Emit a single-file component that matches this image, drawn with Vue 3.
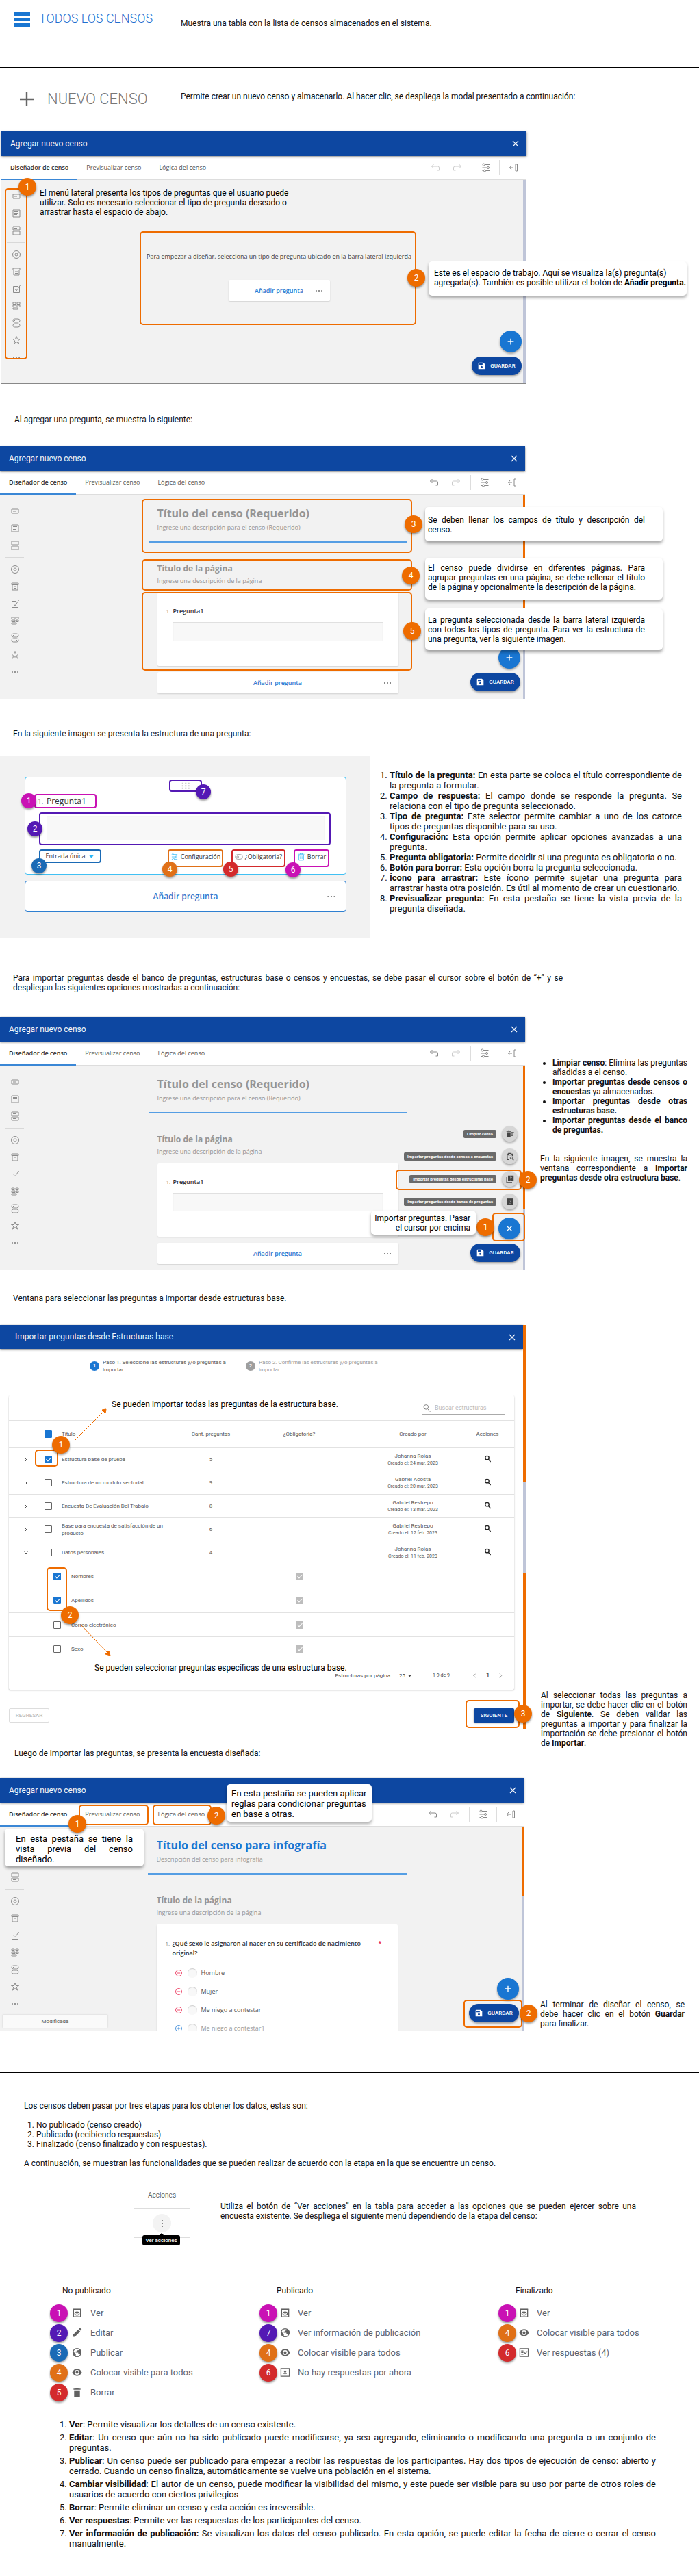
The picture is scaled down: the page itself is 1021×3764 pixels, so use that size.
<script setup>
const tools = ['text', 'comment', 'multi', null, 'radio', 'dropdown', 'check', 'tags', 'switch', 'star', 'dots']

const importOptions = [
  { label: 'Limpiar censo', icon: 'sweep' },
  { label: 'Importar preguntas desde censos o encuestas', icon: 'clip' },
  { label: 'Importar preguntas desde estructuras base', icon: 'quizzes' },
  { label: 'Importar preguntas desde banco de preguntas', icon: 'quiz' },
]

const structures = [
  { title: 'Estructura base de prueba', count: 5, author: 'Johanna Rojas', date: '24 mar. 2023', checked: true },
  { title: 'Estructura de un modulo sectorial', count: 9, author: 'Gabriel Acosta', date: '20 mar. 2023' },
  { title: 'Encuesta De Evaluación Del Trabajo', count: 8, author: 'Gabriel Restrepo', date: '13 mar. 2023' },
  { title: 'Base para encuesta de satisfacción de un producto', count: 6, author: 'Gabriel Restrepo', date: '12 feb. 2023' },
  { title: 'Datos personales', count: 4, author: 'Johanna Rojas', date: '11 feb. 2023', open: true },
]

const questions = [
  { title: 'Nombres', checked: true },
  { title: 'Apellidos', checked: true },
  { title: 'Correo electrónico', checked: false },
  { title: 'Sexo', checked: false },
]

const parts = [
  ['Título de la pregunta:', 'En esta parte se coloca el título correspondiente de la pregunta a formular.'],
  ['Campo de respuesta:', 'El campo donde se responde la pregunta. Se relaciona con el tipo de pregunta seleccionado.'],
  ['Tipo de pregunta:', 'Este selector permite cambiar a uno de los catorce tipos de preguntas disponible para su uso.'],
  ['Configuración:', 'Esta opción permite aplicar opciones avanzadas a una pregunta.'],
  ['Pregunta obligatoria:', 'Permite decidir si una pregunta es obligatoria o no.'],
  ['Botón para borrar:', 'Esta opción borra la pregunta seleccionada.'],
  ['Ícono para arrastrar:', 'Este ícono permite sujetar una pregunta para arrastrar hasta otra posición. Es útil al momento de crear un cuestionario.'],
  ['Previsualizar pregunta:', 'En esta pestaña se tiene la vista previa de la pregunta diseñada.'],
]

const answers = ['Hombre', 'Mujer', 'Me niego a contestar', 'Me niego a contestar1']

const menus = [
  {
    name: 'No publicado',
    items: [
      { n: 1, tone: 'magenta', icon: 'preview', label: 'Ver' },
      { n: 2, tone: 'purple', icon: 'pencil', label: 'Editar' },
      { n: 3, tone: 'blue', icon: 'globe', label: 'Publicar' },
      { n: 4, tone: 'amber', icon: 'eye', label: 'Colocar visible para todos' },
      { n: 5, tone: 'red', icon: 'bin', label: 'Borrar' },
    ],
  },
  {
    name: 'Publicado',
    items: [
      { n: 1, tone: 'magenta', icon: 'preview', label: 'Ver' },
      { n: 7, tone: 'purple', icon: 'globe', label: 'Ver información de publicación' },
      { n: 4, tone: 'amber', icon: 'eye', label: 'Colocar visible para todos' },
      { n: 6, tone: 'red', icon: 'boxx', label: 'No hay respuestas por ahora' },
    ],
  },
  {
    name: 'Finalizado',
    items: [
      { n: 1, tone: 'magenta', icon: 'preview', label: 'Ver' },
      { n: 4, tone: 'amber', icon: 'eye', label: 'Colocar visible para todos' },
      { n: 6, tone: 'red', icon: 'fact', label: 'Ver respuestas (4)' },
    ],
  },
]

const glossary = [
  ['Ver', ': Permite visualizar los detalles de un censo existente.'],
  ['Editar', ': Un censo que aún no ha sido publicado puede modificarse, ya sea agregando, eliminando o modificando una pregunta o un conjunto de preguntas.'],
  ['Publicar', ': Un censo puede ser publicado para empezar a recibir las respuestas de los participantes. Hay dos tipos de ejecución de censo: abierto y cerrado. Cuando un censo finaliza, automáticamente se vuelve una población en el sistema.'],
  ['Cambiar visibilidad', ': El autor de un censo, puede modificar la visibilidad del mismo, y este puede ser visible para su uso por parte de otros roles de usuarios de acuerdo con ciertos privilegios'],
  ['Borrar', ': Permite eliminar un censo y esta acción es irreversible.'],
  ['Ver respuestas', ': Permite ver las respuestas de los participantes del censo.'],
  ['Ver información de publicación:', ' Se visualizan los datos del censo publicado. En esta opción, se puede editar la fecha de cierre o cerrar el censo manualmente.'],
]
</script>

<template>
  <svg class="sprite" aria-hidden="true">
    <symbol id="i-text" viewBox="0 0 16 16"><path d="M3 5h10v6H3zM5 8h4" /></symbol>
    <symbol id="i-comment" viewBox="0 0 16 16"><path d="M3 3h10v10H3zM5 5.500h6M5 7.500h6M5 9.500h4" /></symbol>
    <symbol id="i-multi" viewBox="0 0 16 16"><path d="M3 2h10v5H3zM3 9h10v5H3zM5 4.500h4M5 11.500h4" /></symbol>
    <symbol id="i-radio" viewBox="0 0 16 16"><circle cx="8" cy="8" r="5.500" /><circle cx="8" cy="8" r="2" /></symbol>
    <symbol id="i-dropdown" viewBox="0 0 16 16"><path d="M3 3h10v2.500H3zM4 5.500h8V13H4zM6 8h4M6 10.500h4" /></symbol>
    <symbol id="i-check" viewBox="0 0 16 16"><path d="M12.500 6v7.500h-9v-9H10M6 8.500l2 2.500 5.500-8" /></symbol>
    <symbol id="i-tags" viewBox="0 0 16 16"><path d="M3 3h4v2.500H3zM9 3h4v2.500H9zM3 7h5v2.500H3zM10 7h3v2.500h-3zM3 11h7v2H3z" /></symbol>
    <symbol id="i-switch" viewBox="0 0 16 16"><rect x="3" y="2" width="10" height="5" rx="2.500" /><rect x="3" y="9" width="10" height="5" rx="2.500" /><path d="M5 4.500h1M10 11.500h1" /></symbol>
    <symbol id="i-star" viewBox="0 0 16 16"><path d="M8 2.500l1.500 4h4l-3.200 2.400 1.200 4.200L8 10.500l-3.500 2.600 1.200-4.200L2.500 6.500h4z" /></symbol>
    <symbol id="i-dots" viewBox="0 0 16 16"><path d="M3 8h1.800M7.100 8h1.800M11.200 8h1.800" stroke-width="1.800" /></symbol>
    <symbol id="i-undo" viewBox="0 0 16 16"><path d="M5.500 3L2.500 6l3 3M2.500 6h9q2 0 2 2v4h-3" /></symbol>
    <symbol id="i-redo" viewBox="0 0 16 16"><path d="M10.500 3l3 3-3 3M13.500 6h-9q-2 0-2 2v4h3" /></symbol>
    <symbol id="i-tune" viewBox="0 0 16 16"><circle cx="4.500" cy="3.500" r="1.500" /><circle cx="11" cy="8" r="1.500" /><circle cx="6" cy="12.500" r="1.500" /><path d="M6 3.500h7.500M2.500 8h7M2.500 12.500h2M7.500 12.500h6" /></symbol>
    <symbol id="i-collapse" viewBox="0 0 16 16"><path d="M5 5L2.500 8 5 11M2.500 8H8M11 3h2.500v10H11z" /></symbol>
    <symbol id="i-close" viewBox="0 0 16 16"><path d="M4 4l8 8M12 4l-8 8" /></symbol>
    <symbol id="i-plus" viewBox="0 0 16 16"><path d="M8 3v10M3 8h10" /></symbol>
    <symbol id="i-save" viewBox="0 0 16 16"><path class="fill" fill-rule="evenodd" d="M2 1h9.500L15 4.500V15H1V2zM3 3v3h7V3zM8 8.500a2.200 2.200 0 100 4.400 2.200 2.200 0 000-4.400z" /></symbol>
    <symbol id="i-sweep" viewBox="0 0 16 16"><path class="fill" d="M2 4.500h7V14H2zM1 2h2.500l1-1h2l1 1H10v1.500H1z" /><path d="M10.500 5h5M10.500 8h4M10.500 11h3" stroke-width="1.600" /></symbol>
    <symbol id="i-clip" viewBox="0 0 16 16"><path d="M6 14H2.500V3H5M10 3h2.500v4M5 1.800h5V5H5z" stroke-width="1.600" /><circle cx="10.500" cy="10.500" r="2.200" /><path d="M12 12l3 3" stroke-width="1.600" /></symbol>
    <symbol id="i-quizzes" viewBox="0 0 16 16"><path class="fill" d="M4 1h11v11H4z" /><path d="M1.500 4v10.500H12" stroke-width="1.600" /><path class="cut" d="M8 4.500q1.500-1.500 3 0 .3 1-1.500 2.500v.8M9.500 9v1.200" /></symbol>
    <symbol id="i-quiz" viewBox="0 0 16 16"><path class="fill" d="M1.500 1.500h13v13h-13z" /><path class="cut" d="M6 5.500q2-2 4 0 .3 1.500-2 3v1M8 10.800V12" /></symbol>
    <symbol id="i-search" viewBox="0 0 16 16"><circle cx="6.500" cy="6" r="4" /><path d="M9.500 9.500l4.500 5" /></symbol>
    <symbol id="i-next" viewBox="0 0 16 16"><path d="M5 3l5 5-5 5" /></symbol>
    <symbol id="i-prev" viewBox="0 0 16 16"><path d="M10 3L5 8l5 5" /></symbol>
    <symbol id="i-down" viewBox="0 0 16 16"><path d="M3 5l5 5 5-5" /></symbol>
    <symbol id="i-caret" viewBox="0 0 16 16"><path class="fill" d="M2 5h12l-6 7z" /></symbol>
    <symbol id="i-trash" viewBox="0 0 16 16"><path d="M3.500 5h9v9.500h-9zM2 3h12M6 3V1.500h4V3M6.500 7v5M9.500 7v5" /></symbol>
    <symbol id="i-toggle" viewBox="0 0 16 16"><rect x="1" y="3.500" width="14" height="9" rx="4.500" /><circle cx="5.500" cy="8" r="1.800" /></symbol>
    <symbol id="i-drag" viewBox="0 0 16 16"><path class="fill" d="M2 3h2.500v2.500H2zM7 3h2.500v2.500H7zM12 3h2.500v2.500H12zM2 7h2.500v2.500H2zM7 7h2.500v2.500H7zM12 7h2.500v2.500H12zM2 11h2.500v2.500H2zM7 11h2.500v2.500H7zM12 11h2.500v2.500H12z" /></symbol>
    <symbol id="i-minus" viewBox="0 0 16 16"><circle cx="8" cy="8" r="6" /><path d="M5 8h6" /></symbol>
    <symbol id="i-add" viewBox="0 0 16 16"><circle cx="8" cy="8" r="6" /><path d="M5 8h6M8 5v6" /></symbol>
    <symbol id="i-preview" viewBox="0 0 16 16"><path d="M2.500 2.500h11v11.500h-11z" stroke-width="1.400" /><path d="M2 3h12" stroke-width="2.600" /><ellipse cx="8" cy="9" rx="3.400" ry="2.500" stroke-width="1.400" /><circle class="fill" cx="8" cy="9" r="1" /></symbol>
    <symbol id="i-pencil" viewBox="0 0 16 16"><path class="fill" d="M1.500 14.500v-3L10 3l3 3-8.500 8.500zM11 2l1-1q.7-.5 1.400 0L15 2.600q.5.700 0 1.400l-1 1z" /></symbol>
    <symbol id="i-globe" viewBox="0 0 16 16"><circle cx="8" cy="8" r="6.300" stroke-width="1.400" /><path class="fill" d="M2 6l4 4v4l1 1Q2 14 1.500 8zM6 8h4v2h1.500q1 0 1.500 1.500l2-3Q15 4 11 2v1.500q0 1-1.500 1H8V6H6z" /></symbol>
    <symbol id="i-eye" viewBox="0 0 16 16"><path class="fill" fill-rule="evenodd" d="M8 2.500Q13 2.500 15.500 8 13 13.500 8 13.500T.500 8Q3 2.500 8 2.500zM8 4.300a3.700 3.700 0 100 7.400 3.700 3.700 0 000-7.400zM8 5.800a2.200 2.200 0 110 4.400 2.200 2.200 0 010-4.400z" /></symbol>
    <symbol id="i-bin" viewBox="0 0 16 16"><path class="fill" d="M3.500 5h9v10h-9zM2.500 2.500h3L6.500 1h3l1 1.500h3V4h-11z" /></symbol>
    <symbol id="i-boxx" viewBox="0 0 16 16"><path d="M1.500 2h13v12h-13z" stroke-width="1.400" /><path d="M6 5.500l4 5M10 5.500l-4 5" stroke-width="1.400" /></symbol>
    <symbol id="i-fact" viewBox="0 0 16 16"><path d="M1.500 2h13v12h-13z" stroke-width="1.400" /><path d="M3.500 5.500H7M3.500 8H7M3.500 10.500H7M8.500 8l1.500 1.500L13 6" stroke-width="1.200" /></symbol>
  </svg>

  <main class="guide">
    <section class="lead">
      <a class="lead-link all" href="#todos">
        <span class="bars"><i></i><i></i><i></i></span>TODOS LOS CENSOS
      </a>
      <p>Muestra una tabla con la lista de censos almacenados en el sistema.</p>
    </section>
    <hr />
    <section class="lead second">
      <a class="lead-link fresh" href="#nuevo">
        <svg class="ico"><use href="#i-plus" /></svg>NUEVO CENSO
      </a>
      <p>Permite crear un nuevo censo y almacenarlo. Al hacer clic, se despliega la modal presentado a continuación:</p>
    </section>

    <!-- Empty designer -->
    <div class="split first">
      <figure class="shot">
        <header class="bar">Agregar nuevo censo<button class="x" aria-label="Cerrar"><svg class="ico"><use href="#i-close" /></svg></button></header>
        <nav class="tabs">
          <button class="tab on">Diseñador de censo</button>
          <button class="tab">Previsualizar censo</button>
          <button class="tab">Lógica del censo</button>
          <span class="tools">
            <button class="off" aria-label="Deshacer"><svg class="ico"><use href="#i-undo" /></svg></button>
            <button class="off" aria-label="Rehacer"><svg class="ico"><use href="#i-redo" /></svg></button>
            <button class="sep" aria-label="Ajustes"><svg class="ico"><use href="#i-tune" /></svg></button>
            <button class="sep" aria-label="Contraer"><svg class="ico"><use href="#i-collapse" /></svg></button>
          </span>
        </nav>
        <div class="body bottom-line">
          <div class="side">
            <template v-for="(t, i) in tools" :key="i"><button v-if="t" :aria-label="t"><svg class="ico"><use :href="'#i-' + t" /></svg></button><i v-else></i></template>
          </div>
          <div class="canvas empty">
            <p>Para empezar a diseñar, selecciona un tipo de pregunta ubicado en la barra lateral izquierda</p>
            <div class="add small"><button>Añadir pregunta</button><svg class="ico"><use href="#i-dots" /></svg></div>
          </div>
          <span class="scroll wide"></span>
          <button class="fab" aria-label="Añadir"><svg class="ico"><use href="#i-plus" /></svg></button>
          <button class="save"><svg class="ico"><use href="#i-save" /></svg>GUARDAR</button>
        </div>
        <p class="note menu-note">El menú lateral presenta los tipos de preguntas que el usuario puede utilizar. Solo es necesario seleccionar el tipo de pregunta deseado o arrastrar hasta el espacio de abajo.</p>
        <div class="mark m-side"><b class="badge">1</b></div>
        <div class="mark m-work"><b class="badge">2</b></div>
        <figcaption class="callout c-work">Este es el espacio de trabajo. Aquí se visualiza la(s) pregunta(s) agregada(s). También es posible utilizar el botón de <strong>Añadir pregunta.</strong></figcaption>
      </figure>
    </div>

    <p class="text t1">Al agregar una pregunta, se muestra lo siguiente:</p>

    <!-- Designer with one question -->
    <div class="split w2">
      <figure class="shot">
        <header class="bar">Agregar nuevo censo<button class="x" aria-label="Cerrar"><svg class="ico"><use href="#i-close" /></svg></button></header>
        <nav class="tabs">
          <button class="tab on">Diseñador de censo</button>
          <button class="tab">Previsualizar censo</button>
          <button class="tab">Lógica del censo</button>
          <span class="tools">
            <button aria-label="Deshacer"><svg class="ico"><use href="#i-undo" /></svg></button>
            <button class="off" aria-label="Rehacer"><svg class="ico"><use href="#i-redo" /></svg></button>
            <button class="sep" aria-label="Ajustes"><svg class="ico"><use href="#i-tune" /></svg></button>
            <button class="sep" aria-label="Contraer"><svg class="ico"><use href="#i-collapse" /></svg></button>
          </span>
        </nav>
        <div class="body">
          <div class="side">
            <template v-for="(t, i) in tools" :key="i"><button v-if="t" :aria-label="t"><svg class="ico"><use :href="'#i-' + t" /></svg></button><i v-else></i></template>
          </div>
          <div class="canvas">
            <div class="head">
              <input class="big" aria-label="Título" placeholder="Título del censo (Requerido)" />
              <input class="desc" aria-label="Descripción" placeholder="Ingrese una descripción para el censo (Requerido)" />
            </div>
            <div class="page">
              <input class="mid" aria-label="Título de página" placeholder="Título de la página" />
              <input class="desc" aria-label="Descripción de página" placeholder="Ingrese una descripción de la página" />
              <div class="card">
                <label for="q2"><small>1.</small>Pregunta1</label>
                <input id="q2" class="answer" />
              </div>
              <div class="add"><button>Añadir pregunta</button><svg class="ico"><use href="#i-dots" /></svg></div>
            </div>
          </div>
          <span class="scroll"><i></i></span>
          <button class="fab" aria-label="Añadir"><svg class="ico"><use href="#i-plus" /></svg></button>
          <button class="save"><svg class="ico"><use href="#i-save" /></svg>GUARDAR</button>
        </div>
        <div class="mark m-title"><b class="badge">3</b></div>
        <div class="mark m-page"><b class="badge">4</b></div>
        <div class="mark m-question"><b class="badge">5</b></div>
        <p class="callout c-title">Se deben llenar los campos de título y descripción del censo.</p>
        <p class="callout c-page">El censo puede dividirse en diferentes páginas. Para agrupar preguntas en una página, se debe rellenar el título de la página y opcionalmente la descripción de la página.</p>
        <p class="callout c-question">La pregunta seleccionada desde la barra lateral izquierda con todos los tipos de pregunta. Para ver la estructura de una pregunta, ver la siguiente imagen.</p>
      </figure>
    </div>

    <p class="text t2">En la siguiente imagen se presenta la estructura de una pregunta:</p>

    <!-- Anatomy of a question -->
    <div class="anatomy">
      <figure class="sheet">
        <div class="piece">
          <span class="frame drag purple"><svg class="ico"><use href="#i-drag" /></svg><b class="badge mini purple-bg">7</b></span>
          <label class="frame name magenta" for="ans"><small>1.</small>Pregunta1<b class="badge mini magenta-bg">1</b></label>
          <div class="frame field purple"><input id="ans" /><b class="badge mini purple-bg">2</b></div>
          <div class="actions">
            <button class="frame kind blue">Entrada única<svg class="ico cyan"><use href="#i-caret" /></svg><b class="badge mini blue-bg">3</b></button>
            <button class="frame conf amber"><svg class="ico cyan"><use href="#i-tune" /></svg>Configuración<b class="badge mini amber-bg">4</b></button>
            <button class="frame must red"><svg class="ico"><use href="#i-toggle" /></svg>¿Obligatoria?<b class="badge mini red-bg">5</b></button>
            <button class="frame del magenta"><svg class="ico cyan"><use href="#i-trash" /></svg>Borrar<b class="badge mini magenta-bg">6</b></button>
          </div>
        </div>
        <div class="piece more"><button>Añadir pregunta</button><svg class="ico"><use href="#i-dots" /></svg></div>
      </figure>
      <ol class="parts">
        <li v-for="p in parts" :key="p[0]"><strong>{{ p[0] }}</strong> {{ p[1] }}</li>
      </ol>
    </div>

    <p class="text t3">Para importar preguntas desde el banco de preguntas, estructuras base o censos y encuestas, se debe pasar el cursor sobre el botón de “+” y se despliegan las siguientes opciones mostradas a continuación:</p>

    <!-- Import options -->
    <div class="split w3">
      <figure class="shot">
        <header class="bar">Agregar nuevo censo<button class="x" aria-label="Cerrar"><svg class="ico"><use href="#i-close" /></svg></button></header>
        <nav class="tabs">
          <button class="tab on">Diseñador de censo</button>
          <button class="tab">Previsualizar censo</button>
          <button class="tab">Lógica del censo</button>
          <span class="tools">
            <button aria-label="Deshacer"><svg class="ico"><use href="#i-undo" /></svg></button>
            <button class="off" aria-label="Rehacer"><svg class="ico"><use href="#i-redo" /></svg></button>
            <button class="sep" aria-label="Ajustes"><svg class="ico"><use href="#i-tune" /></svg></button>
            <button class="sep" aria-label="Contraer"><svg class="ico"><use href="#i-collapse" /></svg></button>
          </span>
        </nav>
        <div class="body">
          <div class="side">
            <template v-for="(t, i) in tools" :key="i"><button v-if="t" :aria-label="t"><svg class="ico"><use :href="'#i-' + t" /></svg></button><i v-else></i></template>
          </div>
          <div class="canvas">
            <div class="head">
              <input class="big" aria-label="Título" placeholder="Título del censo (Requerido)" />
              <input class="desc" aria-label="Descripción" placeholder="Ingrese una descripción para el censo (Requerido)" />
            </div>
            <div class="page">
              <input class="mid" aria-label="Título de página" placeholder="Título de la página" />
              <input class="desc" aria-label="Descripción de página" placeholder="Ingrese una descripción de la página" />
              <div class="card">
                <label for="q3"><small>1.</small>Pregunta1</label>
                <input id="q3" class="answer" />
              </div>
              <div class="add"><button>Añadir pregunta</button><svg class="ico"><use href="#i-dots" /></svg></div>
            </div>
          </div>
          <span class="scroll"><i></i></span>
          <ul class="speed">
            <li v-for="o in importOptions" :key="o.icon"><span>{{ o.label }}</span><button :aria-label="o.label"><svg class="ico"><use :href="'#i-' + o.icon" /></svg></button></li>
          </ul>
          <button class="fab" aria-label="Cerrar opciones"><svg class="ico"><use href="#i-close" /></svg></button>
          <button class="save"><svg class="ico"><use href="#i-save" /></svg>GUARDAR</button>
        </div>
        <div class="mark m-base"><b class="badge">2</b></div>
        <div class="mark m-fab"><b class="badge">1</b></div>
        <p class="callout c-import">Importar preguntas. Pasar el cursor por encima</p>
      </figure>
      <aside class="beside">
        <ul>
          <li><strong>Limpiar censo</strong>: Elimina las preguntas añadidas a el censo.</li>
          <li><strong>Importar preguntas desde censos o encuestas</strong> ya almacenados.</li>
          <li><strong>Importar preguntas desde otras estructuras base.</strong></li>
          <li><strong>Importar preguntas desde el banco de preguntas.</strong></li>
        </ul>
        <p>En la siguiente imagen, se muestra la ventana correspondiente a <strong>Importar preguntas desde otra estructura base</strong>.</p>
      </aside>
    </div>

    <p class="text t4">Ventana para seleccionar las preguntas a importar desde estructuras base.</p>

    <!-- Import dialog -->
    <div class="split w4">
      <figure class="shot dialog">
        <header class="bar">Importar preguntas desde Estructuras base<button class="x" aria-label="Cerrar"><svg class="ico"><use href="#i-close" /></svg></button></header>
        <ol class="steps">
          <li class="now"><b>1</b><span>Paso 1. Seleccione las estructuras y/o preguntas a importar</span></li>
          <li><b>2</b><span>Paso 2. Confirme las estructuras y/o preguntas a importar</span></li>
        </ol>
        <div class="panel">
          <div class="find"><label><svg class="ico"><use href="#i-search" /></svg><input type="search" aria-label="Buscar" placeholder="Buscar estructuras" /></label></div>
          <table>
            <colgroup><col class="k1" /><col class="k2" /><col /><col class="k4" /><col class="k5" /><col class="k6" /><col class="k7" /></colgroup>
            <thead>
              <tr><th></th><th class="pick"><input type="checkbox" class="dash" aria-label="Todas" /></th><th class="name">Título</th><th>Cant. preguntas</th><th>¿Obligatoria?</th><th>Creado por</th><th>Acciones</th></tr>
            </thead>
            <tbody>
              <tr v-for="s in structures" :key="s.title">
                <td class="arrow"><svg class="ico"><use :href="s.open ? '#i-down' : '#i-next'" /></svg></td>
                <td class="pick"><input type="checkbox" :checked="s.checked" :aria-label="s.title" /></td>
                <td class="name">{{ s.title }}</td>
                <td>{{ s.count }}</td>
                <td></td>
                <td>{{ s.author }}<small>Creado el: {{ s.date }}</small></td>
                <td><button class="look" aria-label="Ver"><svg class="ico"><use href="#i-search" /></svg></button></td>
              </tr>
              <tr v-for="q in questions" :key="q.title" class="sub">
                <td></td>
                <td class="pick"><input type="checkbox" :checked="q.checked" :aria-label="q.title" /></td>
                <td class="name">{{ q.title }}</td>
                <td></td>
                <td><input type="checkbox" checked disabled aria-label="Obligatoria" /></td>
                <td></td>
                <td></td>
              </tr>
            </tbody>
          </table>
          <div class="pager">
            <label for="per">Estructuras por página</label>
            <span class="per"><select id="per"><option>25</option></select><svg class="ico"><use href="#i-caret" /></svg></span>
            <span class="range">1-9 de 9</span>
            <button aria-label="Anterior"><svg class="ico"><use href="#i-prev" /></svg></button>
            <b>1</b>
            <button aria-label="Siguiente"><svg class="ico"><use href="#i-next" /></svg></button>
          </div>
        </div>
        <div class="foot"><button class="back" disabled>REGRESAR</button><button class="go">SIGUIENTE</button></div>
        <span class="track"><i></i></span>
        <svg class="arrows" aria-hidden="true"><path d="M110 168L153 125M118 438L158 480" /><path class="tip" d="M155 123l-1 6-5-5zM161 483l-2-7-5 5z" /></svg>
        <p class="note n-all">Se pueden importar todas las preguntas de la estructura base.</p>
        <p class="note n-some">Se pueden seleccionar preguntas específicas de una estructura base.</p>
        <div class="mark m-one"><b class="badge">1</b></div>
        <div class="mark m-two"><b class="badge">2</b></div>
        <div class="mark m-next"><b class="badge">3</b></div>
      </figure>
      <aside class="beside">
        <p>Al seleccionar todas las preguntas a importar, se debe hacer clic en el botón de <strong>Siguiente</strong>. Se deben validar las preguntas a importar y para finalizar la importación se debe presionar el botón de <strong>Importar</strong>.</p>
      </aside>
    </div>

    <p class="text t5">Luego de importar las preguntas, se presenta la encuesta diseñada:</p>

    <!-- Finished survey -->
    <div class="split w5">
      <figure class="shot">
        <header class="bar">Agregar nuevo censo<button class="x" aria-label="Cerrar"><svg class="ico"><use href="#i-close" /></svg></button></header>
        <nav class="tabs">
          <button class="tab on">Diseñador de censo</button>
          <button class="tab">Previsualizar censo</button>
          <button class="tab">Lógica del censo</button>
          <span class="tools">
            <button aria-label="Deshacer"><svg class="ico"><use href="#i-undo" /></svg></button>
            <button class="off" aria-label="Rehacer"><svg class="ico"><use href="#i-redo" /></svg></button>
            <button class="sep" aria-label="Ajustes"><svg class="ico"><use href="#i-tune" /></svg></button>
            <button class="sep" aria-label="Contraer"><svg class="ico"><use href="#i-collapse" /></svg></button>
          </span>
        </nav>
        <div class="body">
          <div class="side">
            <template v-for="(t, i) in tools" :key="i"><button v-if="t" :aria-label="t"><svg class="ico"><use :href="'#i-' + t" /></svg></button><i v-else></i></template>
          </div>
          <div class="canvas">
            <div class="head">
              <input class="big named" aria-label="Título" value="Título del censo para infografía" />
              <input class="desc" aria-label="Descripción" value="Descripción del censo para infografía" />
            </div>
            <div class="page">
              <input class="mid" aria-label="Título de página" placeholder="Título de la página" />
              <input class="desc" aria-label="Descripción de página" placeholder="Ingrese una descripción de la página" />
              <fieldset class="card open">
                <legend><small>1.</small><span>¿Qué sexo le asignaron al nacer en su certificado de nacimiento original?</span><em>*</em></legend>
                <label v-for="(a, i) in answers" :key="a" :class="{ extra: i === 3 }">
                  <svg class="ico"><use :href="i === 3 ? '#i-add' : '#i-minus'" /></svg><input type="radio" name="sexo" />{{ a }}
                </label>
              </fieldset>
            </div>
          </div>
          <span class="scroll"><i></i></span>
          <span class="changed">Modificada</span>
          <button class="fab" aria-label="Añadir"><svg class="ico"><use href="#i-plus" /></svg></button>
          <button class="save"><svg class="ico"><use href="#i-save" /></svg>GUARDAR</button>
        </div>
        <p class="callout c-preview">En esta pestaña se tiene la vista previa del censo diseñado.</p>
        <p class="callout c-logic">En esta pestaña se pueden aplicar reglas para condicionar preguntas en base a otras.</p>
        <div class="mark m-preview"><b class="badge">1</b></div>
        <div class="mark m-logic"><b class="badge">2</b></div>
        <div class="mark m-save"><b class="badge">2</b></div>
      </figure>
      <aside class="beside">
        <p>Al terminar de diseñar el censo, se debe hacer clic en el botón <strong>Guardar</strong> para finalizar.</p>
      </aside>
    </div>

    <hr class="later" />

    <section class="stages">
      <p>Los censos deben pasar por tres etapas para los obtener los datos, estas son:</p>
      <ol>
        <li>No publicado (censo creado)</li>
        <li>Publicado (recibiendo respuestas)</li>
        <li>Finalizado (censo finalizado y con respuestas).</li>
      </ol>
      <p>A continuación, se muestran las funcionalidades que se pueden realizar de acuerdo con la etapa en la que se encuentre un censo.</p>
    </section>

    <section class="see">
      <figure class="kebab">
        <div class="th">Acciones</div>
        <div class="td"><button aria-label="Ver acciones"><i></i><i></i><i></i></button><span>Ver acciones</span></div>
      </figure>
      <p>Utiliza el botón de “Ver acciones” en la tabla para acceder a las opciones que se pueden ejercer sobre una encuesta existente. Se despliega el siguiente menú dependiendo de la etapa del censo:</p>
    </section>

    <section class="menus">
      <div v-for="m in menus" :key="m.name">
        <h2>{{ m.name }}</h2>
        <ul>
          <li v-for="it in m.items" :key="it.label">
            <b class="badge" :class="it.tone + '-bg'">{{ it.n }}</b>
            <svg class="ico"><use :href="'#i-' + it.icon" /></svg>
            <span>{{ it.label }}</span>
          </li>
        </ul>
      </div>
    </section>

    <ol class="glossary">
      <li v-for="g in glossary" :key="g[0]"><strong>{{ g[0] }}</strong>{{ g[1] }}</li>
    </ol>
  </main>
</template>

<style>
body { margin: 0; background: #fff; }
symbol .fill { fill: currentColor; stroke: none; }
symbol .cut { stroke: #d6d6d6; }
</style>

<style scoped>
.guide, .guide * { box-sizing: border-box; }
.guide { font: 12px/14px Roboto, "Liberation Sans", sans-serif; color: #111; padding-bottom: 35px; overflow: hidden; }
.sprite { position: absolute; width: 0; height: 0; }
p, ol, ul, figure, h2, fieldset { margin: 0; padding: 0; }
button { font: inherit; color: inherit; background: none; border: 0; padding: 0; }
input { font: inherit; border: 0; padding: 0; margin: 0; outline: 0; background: none; }
strong { font-weight: 700; }
.ico { width: 14px; height: 14px; fill: none; stroke: currentColor; stroke-width: 1; flex: none; display: block; }
hr { border: 0; height: 1px; background: #000; margin: 0; }

.lead { display: flex; height: 98px; }
.lead-link { display: flex; align-items: center; width: 264px; flex: none; text-decoration: none; font-weight: 300; }
.all { height: 22px; margin-top: 16px; padding-left: 21px; gap: 13px; color: #1f6fd0; font-size: 18px; }
.bars { display: grid; gap: 3px; width: 23px; margin-top: 3px; }
.bars i { height: 5px; background: #1976d2; }
.lead p { margin-top: 27px; }
.second { height: 93px; }
.second p { margin-top: 35px; }
.fresh { height: 24px; margin-top: 34px; padding-left: 23px; gap: 14px; color: #777; font-size: 22px; }
.fresh .ico { width: 32px; height: 32px; color: #666; stroke-width: 1.200; }

.split { display: grid; grid-template-columns: 767fr 254fr; }
.first { padding-left: 2px; grid-template-columns: 767fr 252fr; }
.shot { position: relative; min-width: 0; }
.bar { display: flex; align-items: center; justify-content: space-between; height: 36px; padding: 0 8px 0 13px; background: #0d47a1; color: #f3f6fb; position: relative; box-shadow: 0 1px 3px rgba(0, 0, 0, .5); z-index: 1; }
.x .ico { width: 16px; height: 16px; stroke-width: 1.200; }
.tabs { display: flex; height: 35px; background: #fff; border-bottom: 1px solid #ddd; font: 9px/12px "Open Sans", sans-serif; color: #555; }
.tab { padding: 0 13px; }
.tab.on { font-weight: 600; color: #333; border-bottom: 2px solid #3a87d6; margin-bottom: -1px; }
.tools { margin-left: auto; display: flex; align-items: center; color: #888; }
.tools button { width: 32px; height: 22px; display: grid; place-items: center; }
.tools .ico { width: 16px; height: 16px; }
.tools .off { color: #ccc; }
.tools .sep { width: 40px; border-left: 1px solid #ddd; }
.tools .off + .sep { margin-left: 5px; }
.body { position: relative; display: flex; min-height: 299px; background: #f2f2f2; font-family: "Open Sans", sans-serif; }
.bottom-line { min-height: 298px; border-bottom: 1px solid #888; }
.side { width: 48px; padding: 11px 5px 0 0; flex: none; display: flex; flex-direction: column; align-items: center; color: #8c8c8c; }
.side button { height: 25px; display: grid; place-items: center; }
.side .ico { width: 16px; height: 16px; }
.side i { width: 27px; height: 1px; background: #d8d8d8; margin: 5px 0 4px; }
.canvas { flex: 1; display: flex; flex-direction: column; align-items: center; padding: 16px 4px 0 0; }
.empty { font-size: 9px; line-height: 12px; color: #444; padding-top: 106px; }
.head, .page { width: 378px; display: flex; flex-direction: column; padding: 0 13px; }
.head { border-bottom: 2px solid #559ee4; padding-bottom: 14px; }
.page { padding-top: 30px; }
.canvas input { display: block; width: 100%; color: #999; }
.canvas input::placeholder { color: #959595; opacity: 1; }
.canvas .big { font-size: 16px; line-height: 22px; height: 22px; font-weight: 700; margin-bottom: 4px; }
.canvas .named { color: #1976d2; }
.canvas .mid { font-size: 12px; line-height: 16px; height: 16px; font-weight: 700; margin-bottom: 4px; }
.canvas .desc { font-size: 9px; line-height: 12px; height: 12px; }
.card { background: #fff; border-radius: 2px; margin-top: 11px; padding: 21px 23px 37px; box-shadow: 0 1px 2px rgba(0, 0, 0, .14); font-size: 9px; line-height: 12px; }
.card label { display: flex; font-weight: 600; color: #333; margin-bottom: 10px; }
.card small { font-size: 8px; font-weight: 400; color: #888; width: 10px; margin-left: -10px; }
.canvas .answer { height: 27px; background: #f8f8f8; box-shadow: inset 0 1px 1px #ddd; }
.add { position: relative; height: 31px; margin-top: 9px; background: #fff; border-radius: 2px; box-shadow: 0 1px 2px rgba(0, 0, 0, .14); display: flex; justify-content: center; align-items: center; color: #888; }
.add button { font-size: 9px; line-height: 12px; font-weight: 600; color: #3079cf; }
.add .ico { position: absolute; right: 8px; top: 8px; width: 16px; height: 16px; }
.small { width: 148px; margin-top: 28px; }
.scroll { position: absolute; right: 0; top: 0; bottom: 0; width: 3px; background: #bfc5d8; }
.scroll.wide { width: 5px; }
.scroll i { display: block; height: 70%; background: #ee6c00; }
.w5 .scroll i { height: 34%; }
.fab { position: absolute; right: 7px; bottom: 45px; width: 32px; height: 32px; border-radius: 50%; background: #1976d2; color: #fff; display: grid; place-items: center; box-shadow: 0 2px 3px rgba(0, 0, 0, .35); }
.fab .ico { width: 14px; height: 14px; stroke-width: 1.600; }
.save { position: absolute; right: 7px; bottom: 12px; width: 73px; height: 27px; border-radius: 14px; background: #0d47a1; color: #fff; font: 500 8px/12px Roboto, sans-serif; display: flex; align-items: center; justify-content: center; gap: 7px; box-shadow: 0 2px 3px rgba(0, 0, 0, .35); }
.save .ico { width: 11px; height: 11px; }

.mark { position: absolute; border: 2px solid #ee6c00; border-radius: 5px; z-index: 2; }
.badge { position: absolute; width: 26px; height: 26px; border-radius: 50%; background: #ee6c00; color: #fff; font: 400 12px/26px Roboto, sans-serif; text-align: center; box-shadow: 0 2px 3px rgba(0, 0, 0, .4); flex: none; }
.note { position: absolute; z-index: 2; color: #000; }
.callout { position: absolute; z-index: 3; background: #fff; border-radius: 5px; box-shadow: 0 3px 4px rgba(0, 0, 0, .35); color: #000; text-align: justify; }
.menu-note { left: 56px; top: 83px; width: 372px; }
.m-side { left: 5px; top: 83px; width: 33px; height: 250px; }
.m-side .badge { left: 18px; top: -17px; }
.m-work { left: 202px; top: 146px; width: 404px; height: 137px; }
.m-work .badge { left: 389px; top: 53px; }
.c-work { left: 624px; top: 190px; width: 377px; height: 50px; padding: 10px 0 0 8px; text-align: left; }
.m-title, .m-page, .m-question { left: 207px; width: 395px; }
.m-title { top: 77px; height: 79px; }
.m-title .badge { left: 382px; top: 22px; }
.m-page { top: 165px; height: 46px; }
.m-page .badge { left: 378px; top: 9px; }
.m-question { top: 213px; height: 115px; }
.m-question .badge { left: 380px; top: 42px; }
.c-title, .c-page, .c-question { left: 621px; width: 347px; padding: 8px 26px 0 4px; height: 61px; }
.c-title { top: 89px; height: 50px; padding-top: 12px; }
.c-page { top: 163px; }
.c-question { top: 237px; padding-top: 10px; }

.text { padding: 0 19px; }
.t1 { margin: 45px 0 32px; padding-left: 21px; }
.t2 { margin: 43px 0 26px; }
.t3 { margin: 52px 0 36px; width: 841px; max-width: 100%; text-align: justify; }
.t4 { margin: 34px 0 32px; }
.t5 { margin: 1px 0 29px; padding-left: 21px; }

.anatomy { display: grid; grid-template-columns: 541fr 480fr; }
.sheet { background: #f2f2f2; padding: 30px 35px 38px 36px; font: 10px/14px "Open Sans", sans-serif; color: #333; }
.piece { display: flex; flex-direction: column; height: 143px; background: #fff; border: 1px solid #41c0f3; border-radius: 4px; padding-top: 3px; }
.frame { position: relative; border: 2px solid; border-radius: 4px; display: flex; align-items: center; }
.mini { width: 22px; height: 22px; line-height: 22px; }
.purple { border-color: #5419b4; } .purple-bg { background: #5419b4; }
.magenta { border-color: #c911b4; } .magenta-bg { background: #c911b4; }
.blue { border-color: #1a6ab5; } .blue-bg { background: #1a6ab5; }
.amber { border-color: #e07017; } .amber-bg { background: #e07017; }
.red { border-color: #d32a2c; } .red-bg { background: #d32a2c; }
.cyan { color: #29b6f6; }
.drag { align-self: center; width: 48px; height: 18px; justify-content: center; color: #ccc; }
.drag .badge { left: 37px; top: 5px; }
.name.frame { width: 91px; height: 21px; margin: 3px 0 0 13px; padding-left: 3px; font-size: 12px; }
.name.frame small { width: 13px; font-size: 10px; color: #999; }
.name.frame .badge { left: -21px; top: -3px; }
.field { height: 48px; margin: 6px 22px 0 20px; padding: 3px 7px 6px 9px; }
.field input { width: 100%; height: 100%; background: #f8f8f8; box-shadow: inset 0 1px 1px #ddd; }
.field .badge { left: -19px; top: 11px; }
.actions { display: flex; gap: 12px; margin: 6px 24px 0 20px; align-items: flex-start; }
.actions .frame { height: 26px; padding-bottom: 5px; gap: 3px; white-space: nowrap; font-size: 9px; justify-content: center; }
.actions .ico { width: 12px; height: 12px; }
.actions .kind { width: 91px; height: 20px; padding: 0; margin-right: auto; gap: 5px; }
.actions .kind .ico { width: 9px; height: 9px; }
.kind .badge { left: -13px; top: 11px; }
.conf { width: 81px; } .conf .badge { left: -10px; top: 16px; }
.must { width: 79px; color: #333; } .must .badge { left: -14px; top: 16px; }
.must .ico { color: #888; }
.del { width: 52px; } .del .badge { left: -14px; top: 17px; }
.piece.more { position: relative; height: 45px; margin-top: 9px; padding: 0; border-color: #2f80d1; align-items: center; justify-content: center; color: #888; }
.more button { font-size: 12px; color: #3079cf; font-weight: 600; }
.more .ico { position: absolute; right: 12px; top: 13px; width: 18px; height: 18px; }
.parts { padding: 20px 25px 0 28px; font-size: 13px; line-height: 15px; text-align: justify; }

.speed { position: absolute; right: 11px; top: 88px; list-style: none; display: grid; gap: 10px; font: 700 6px/12px Roboto, sans-serif; }
.speed li { display: flex; align-items: center; justify-content: flex-end; gap: 8px; height: 23px; }
.speed span { background: #6a6a6a; color: #fff; border-radius: 2px; padding: 0 5px; }
.speed button { width: 23px; height: 23px; border-radius: 50%; background: #d6d6d6; display: grid; place-items: center; color: #444; box-shadow: 0 2px 3px rgba(0, 0, 0, .3); }
.speed .ico { width: 12px; height: 12px; }
.m-base { left: 578px; top: 223px; width: 184px; height: 30px; }
.m-base .badge { left: 178px; top: 0; }
.m-fab { left: 719px; top: 286px; width: 48px; height: 42px; }
.m-fab .badge { left: -25px; top: 6px; }
.c-import { left: 542px; top: 283px; width: 153px; height: 35px; padding: 4px 8px 0 0; text-align: right; }
.beside { text-align: justify; padding: 60px 17px 0 22px; }
.beside ul { padding-left: 18px; margin-bottom: 28px; }
.w4 .beside { padding-top: 534px; }
.w5 .beside { padding: 324px 21px 0 24px; }

.w4 { grid-template-columns: 768fr 253fr; }
.dialog { height: 591px; padding-right: 4px; font-size: 8px; line-height: 11px; color: #555; }
.dialog .bar { height: 35px; font-size: 12px; padding-left: 22px; }
.steps { display: flex; list-style: none; height: 68px; padding: 14px 0 0 131px; }
.steps li { width: 228px; display: flex; gap: 5px; align-items: center; height: 22px; color: #999; }
.steps span { width: 187px; }
.steps b { width: 14px; height: 14px; border-radius: 50%; background: #9e9e9e; color: #fff; text-align: center; line-height: 14px; font-weight: 500; }
.steps .now { color: #555; } .steps .now b { background: #1976d2; }
.panel { margin: 0 13px; box-shadow: 0 1px 2px rgba(0, 0, 0, .3); border-radius: 2px; }
.find { height: 36px; display: flex; justify-content: flex-end; padding: 9px 14px 0 0; }
.find label { width: 120px; height: 19px; border-bottom: 1px solid #aaa; display: flex; align-items: center; gap: 5px; }
.find .ico { width: 13px; height: 13px; color: #666; }
.find input { width: 90px; font-size: 9px; appearance: none; }
.find input::placeholder { color: #bbb; opacity: 1; }
table { width: 100%; border-collapse: collapse; table-layout: fixed; }
.k1 { width: 41px; } .k2 { width: 36px; } .k4 { width: 66px; } .k5 { width: 192px; } .k6 { width: 140px; } .k7 { width: 78px; }
th, td { border-top: 1px solid #e2e2e2; padding: 0; height: 34px; text-align: center; font-weight: 400; vertical-align: middle; }
th { height: 40px; }
th.name, td.name { text-align: left; padding-right: 20px; }
td small { display: block; font-size: 7px; }
.pick { text-align: left; padding-left: 11px; }
.sub td { height: 35px; } .sub:nth-child(odd) td { height: 36px; }
.sub .pick { padding-left: 24px; }
.sub .name { padding-left: 14px; }
.arrow .ico { width: 8px; height: 8px; margin-left: 21px; stroke-width: 2; }
.look .ico { width: 11px; height: 11px; color: #222; stroke-width: 2; }
input[type="checkbox"] { appearance: none; display: inline-block; vertical-align: middle; position: relative; width: 11px; height: 11px; border: 1px solid #666; border-radius: 1px; }
input[type="checkbox"]:checked, .dash[type="checkbox"] { background: #1976d2; border-color: #1976d2; }
input[type="checkbox"]:checked::after { content: ""; position: absolute; left: 3px; top: 0; width: 3px; height: 6px; border: solid #fff; border-width: 0 1px 1px 0; transform: rotate(45deg); }
input[type="checkbox"]:disabled { background: #bdbdbd; border-color: #bdbdbd; }
.dash::after { content: ""; position: absolute; left: 2px; top: 4px; width: 5px; height: 1px; background: #fff; }
.pager { height: 41px; border-top: 1px solid #e2e2e2; display: flex; align-items: center; justify-content: flex-end; padding-right: 15px; font-size: 7px; color: #444; }
.pager label { font-size: 8px; }
.per { display: flex; align-items: center; margin: 0 30px 0 13px; }
.per select { appearance: none; border: 0; background: none; padding: 0; font: 8px/11px Roboto, sans-serif; color: #444; }
.per .ico { width: 7px; height: 7px; margin-left: 3px; }
.range { margin-right: 32px; }
.pager b { font-size: 9px; font-weight: 500; margin: 0 12px; }
.pager button .ico { width: 9px; height: 9px; }
.foot { display: flex; justify-content: space-between; padding: 27px 13px 0; }
.foot button { height: 21px; width: 59px; border-radius: 2px; font-weight: 500; }
.back { border: 1px solid #ddd; color: #bbb; }
.go { background: #0d47a1; color: #fff; box-shadow: 0 1px 2px rgba(0, 0, 0, .4); }
.track { position: absolute; right: 0; top: 0; bottom: 0; width: 4px; background: #ee6c00; z-index: 1; }
.track i { display: block; margin-top: 229px; height: 134px; background: #bfc5d8; }
.arrows { position: absolute; left: 0; top: 0; width: 300px; height: 500px; fill: none; stroke: #ee6c00; z-index: 2; }
.arrows .tip { fill: #ee6c00; }
.dialog .note { font-size: 12px; line-height: 14px; white-space: nowrap; }
.n-all { left: 163px; top: 109px; }
.n-some { left: 138px; top: 494px; }
.m-one { left: 51px; top: 182px; width: 34px; height: 25px; }
.m-one .badge { left: 23px; top: -22px; }
.m-two { left: 68px; top: 354px; width: 30px; height: 64px; }
.m-two .badge { left: 19px; top: 55px; }
.m-next { left: 680px; top: 548px; width: 79px; height: 41px; }
.m-next .badge { left: 69px; top: 5px; }

.w5 { grid-template-columns: 765fr 256fr; }
.w5 .body { height: 298px; min-height: 0; overflow: hidden; }
.open { border: 0; padding-bottom: 0; min-width: 0; }
.open legend { display: flex; float: left; width: 100%; font-weight: 600; color: #333; line-height: 14px; margin-bottom: 15px; padding: 0; }
.open legend em { margin-left: auto; color: #e8123f; font-style: normal; }
.open legend span { width: 285px; }
.open label { clear: both; align-items: center; gap: 6px; height: 14px; margin: 0 0 13px 3px; font-weight: 400; color: #555; }
.open .ico { color: #e8123f; width: 12px; height: 12px; }
.open .extra { color: #999; } .open .extra .ico { color: #1976d2; }
.canvas .open input { appearance: none; width: 14px; height: 14px; border-radius: 50%; background: #f8f8f8; box-shadow: inset 0 1px 1px #ccc; margin-left: 1px; }
.changed { position: absolute; left: 4px; bottom: 4px; width: 153px; height: 19px; background: #fafafa; box-shadow: 0 0 2px rgba(0, 0, 0, .15); font: 8px/19px Roboto, sans-serif; text-align: center; color: #555; }
.m-preview, .m-logic { z-index: 4; top: 39px; height: 30px; }
.m-preview { left: 115px; width: 102px; }
.m-preview .badge { left: -17px; top: 13px; }
.m-logic { left: 223px; width: 86px; }
.m-logic .badge { left: 78px; top: 1px; }
.c-preview, .c-logic { height: 55px; font-size: 13px; line-height: 15px; }
.c-preview { left: 7px; top: 74px; width: 203px; padding: 7px 16px 0; }
.c-logic { left: 331px; top: 9px; width: 212px; padding: 6px 4px 0 7px; text-align: left; }
.m-save { left: 677px; top: 324px; width: 86px; height: 41px; }
.m-save .badge { left: 80px; top: 5px; }

.later { margin-top: 61px; }
.stages { padding: 41px 35px 0; }
.stages ol { margin: 14px 0; padding-left: 18px; }
.see { display: flex; margin-top: 20px; padding: 0 92px 0 196px; gap: 45px; text-align: justify; }
.see p { margin-top: 29px; flex: 1; }
.kebab { width: 81px; flex: none; font-size: 10px; color: #666; text-align: center; }
.th { height: 39px; line-height: 38px; border-top: 1px solid #ddd; }
.td { position: relative; height: 43px; border: solid #ddd; border-width: 1px 0; padding-top: 7px; }
.td button { width: 27px; height: 27px; border-radius: 50%; background: #f3f3f3; display: inline-grid; align-content: center; justify-items: center; gap: 2px; }
.td i { width: 2px; height: 2px; background: #666; border-radius: 50%; }
.td span { position: absolute; left: 12px; top: 38px; width: 55px; height: 15px; border-radius: 3px; background: #000; color: #fff; font: 500 8px/15px Roboto, sans-serif; }
.td span::before { content: ""; position: absolute; left: 24px; top: -3px; border: solid transparent; border-width: 0 4px 4px; border-bottom-color: #000; }
.menus { display: grid; grid-template-columns: 306fr 349fr 293fr; padding: 70px 0 0 73px; }
.menus h2 { font-size: 12px; line-height: 14px; font-weight: 400; margin-left: 25px; }
.menus ul { list-style: none; margin-top: 11px; }
.menus li { display: flex; align-items: center; height: 29px; color: #5a6270; font-size: 13px; }
.menus .badge { position: static; }
.menus .ico { width: 15px; height: 15px; color: #616161; margin: 0 11px 0 4px; }
.menus div:first-child h2 { margin-left: 18px; }
.menus div:first-child .ico { margin: 0 12px 0 6px; }
.glossary { margin: 25px 63px 0 87px; padding-left: 14px; font-size: 13px; line-height: 15px; text-align: justify; }
.glossary li { margin-bottom: 4px; }
</style>
